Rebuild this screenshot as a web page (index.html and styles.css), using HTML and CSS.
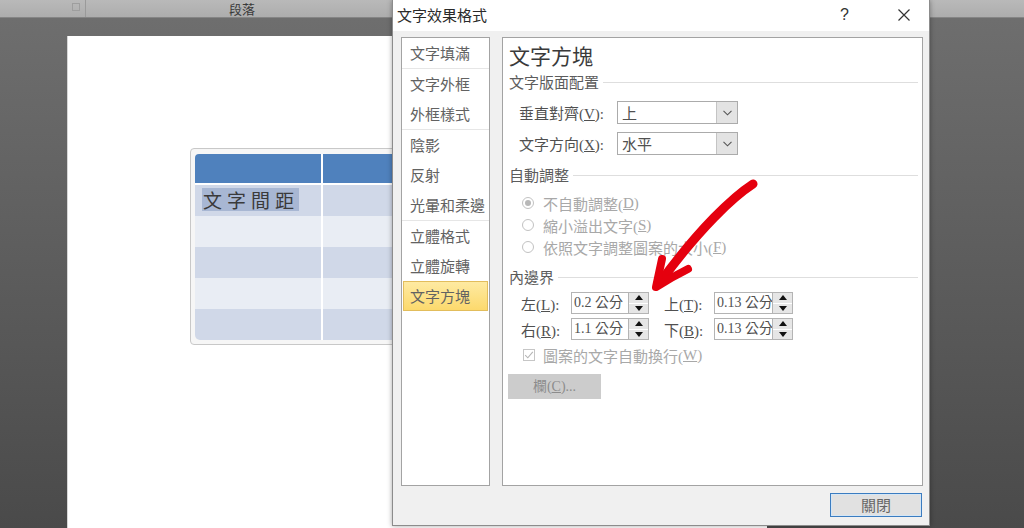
FILE: index.html
```html
<!DOCTYPE html>
<html lang="zh-Hant">
<head>
  <meta charset="UTF-8">
  <title>文字效果格式</title>
  <link rel="stylesheet" href="styles.css">
</head>
<body>
  <div class="app">
    <div class="ribbon">
      <div class="ribbon-group first"><span class="launcher"></span></div>
      <div class="ribbon-group second"><span class="group-label">段落</span></div>
    </div>

    <div class="workspace">
      <div class="page">
        <div class="table-frame">
          <table class="doc-table">
            <tr><th class="col-a"></th><th></th></tr>
            <tr class="dark"><td class="col-a"><span class="sel-text">文字間距</span></td><td></td></tr>
            <tr class="light"><td class="col-a"></td><td></td></tr>
            <tr class="dark"><td class="col-a"></td><td></td></tr>
            <tr class="light"><td class="col-a"></td><td></td></tr>
            <tr class="dark last"><td class="col-a"></td><td></td></tr>
          </table>
        </div>
      </div>
    </div>

    <div class="dialog">
      <div class="titlebar">
        <span class="title">文字效果格式</span>
        <span class="help">?</span>
        <svg class="close-x" width="12" height="12" viewBox="0 0 12 12"><path d="M0.5 0.5 L11.5 11.5 M11.5 0.5 L0.5 11.5" stroke="#333" stroke-width="1.2" fill="none"/></svg>
      </div>

      <div class="dialog-body">
        <div class="nav">
          <div class="nav-group">
            <div class="nav-item">文字填滿</div>
          </div>
          <div class="nav-group">
            <div class="nav-item">文字外框</div>
            <div class="nav-item">外框樣式</div>
          </div>
          <div class="nav-group">
            <div class="nav-item">陰影</div>
            <div class="nav-item">反射</div>
            <div class="nav-item">光暈和柔邊</div>
          </div>
          <div class="nav-group end">
            <div class="nav-item">立體格式</div>
            <div class="nav-item">立體旋轉</div>
            <div class="nav-item selected">文字方塊</div>
          </div>
        </div>

        <div class="content">
          <h2 class="pane-title">文字方塊</h2>

          <div class="section-head first">文字版面配置</div>
          <div class="field-row">
            <span class="label">垂直對齊(<u>V</u>):</span>
            <div class="select">
              <span class="select-value">上</span>
              <span class="select-arrow"><svg width="9" height="6" viewBox="0 0 9 6"><path d="M0.5 0.8 L4.5 4.8 L8.5 0.8" stroke="#555" stroke-width="1.1" fill="none"/></svg></span>
            </div>
          </div>
          <div class="field-row second">
            <span class="label">文字方向(<u>X</u>):</span>
            <div class="select">
              <span class="select-value">水平</span>
              <span class="select-arrow"><svg width="9" height="6" viewBox="0 0 9 6"><path d="M0.5 0.8 L4.5 4.8 L8.5 0.8" stroke="#555" stroke-width="1.1" fill="none"/></svg></span>
            </div>
          </div>

          <div class="section-head auto">自動調整</div>
          <div class="option first"><span class="radio checked"></span>不自動調整(<u>D</u>)</div>
          <div class="option"><span class="radio"></span>縮小溢出文字(<u>S</u>)</div>
          <div class="option"><span class="radio"></span>依照文字調整圖案的大小(<u>F</u>)</div>

          <div class="section-head inner">內邊界</div>
          <div class="margin-row first">
            <span class="m-label">左(<u>L</u>):</span>
            <div class="spin"><span class="spin-value">0.2 公分</span><span class="spin-btns"><span class="up"></span><span class="down"></span></span></div>
            <span class="m-label right">上(<u>T</u>):</span>
            <div class="spin wide"><span class="spin-value">0.13 公分</span><span class="spin-btns"><span class="up"></span><span class="down"></span></span></div>
          </div>
          <div class="margin-row">
            <span class="m-label">右(<u>R</u>):</span>
            <div class="spin"><span class="spin-value">1.1 公分</span><span class="spin-btns"><span class="up"></span><span class="down"></span></span></div>
            <span class="m-label right">下(<u>B</u>):</span>
            <div class="spin wide"><span class="spin-value">0.13 公分</span><span class="spin-btns"><span class="up"></span><span class="down"></span></span></div>
          </div>

          <div class="check-row">
            <span class="checkbox"><svg width="10" height="10" viewBox="0 0 10 10"><path d="M1.2 5.2 L3.8 7.8 L8.8 1.8" stroke="#b5b5b5" stroke-width="1.1" fill="none"/></svg></span>
            圖案的文字自動換行(<u>W</u>)
          </div>

          <div class="columns-btn">欄(<u>C</u>)...</div>
        </div>
      </div>

      <div class="dialog-footer">
        <div class="close-btn">關閉</div>
      </div>
    </div>

    <svg class="annotation" width="1024" height="528" viewBox="0 0 1024 528">
      <path d="M753 184 C733 197 700 228 661 281" stroke="#e5000e" stroke-width="9" stroke-linecap="round" fill="none"/>
      <path d="M662 259 Q659 273 656 287 Q672 277 688 269" stroke="#e5000e" stroke-width="8" stroke-linecap="round" stroke-linejoin="round" fill="none"/>
    </svg>
  </div>
</body>
</html>
```

FILE: styles.css
```css
body {
  margin: 0;
  width: 1024px;
  height: 528px;
  overflow: hidden;
  font-family: "Noto Sans CJK TC", sans-serif;
}
.app {
  position: relative;
  width: 1024px;
  height: 528px;
  background: #4c4c4c;
}

/* ribbon strip at top */
.ribbon {
  display: flex;
  height: 17px;
  background: linear-gradient(#b9b9b9, #adadad);
  border-bottom: 1px solid #858585;
}
.ribbon-group.first {
  width: 86px;
  border-right: 1px solid #9a9a9a;
  display: flex;
  justify-content: flex-end;
  padding: 3px 5px 0 0;
  box-sizing: border-box;
}
.launcher {
  width: 6px;
  height: 6px;
  border: 1px solid #9e9e9e;
}
.ribbon-group.second {
  width: 312px;
  height: 17px;
  text-align: center;
}
.group-label {
  display: block;
  font-size: 13px;
  line-height: 19px;
  margin-top: -1px;
  color: #3a3a3a;
}

/* document area */
.workspace {
  height: 510px;
  box-sizing: border-box;
  padding: 18px 0 0 67px;
  background: linear-gradient(#6e6e6e, #4a4a4a);
}
.page {
  width: 700px;
  height: 100%;
  box-sizing: border-box;
  background: #fff;
  border-left: 1px solid #d6d6d6;
  padding: 112px 0 0 122px;
}
.table-frame {
  width: 300px;
  border: 1px solid #c8c8c8;
  border-radius: 4px;
  background: #f6f6f6;
  padding: 5px 0 4px 4px;
}
.doc-table {
  border-collapse: separate;
  border-spacing: 0;
  width: 100%;
}
.doc-table th {
  height: 29px;
  padding: 0;
  background: #4f81bd;
  border-bottom: 2px solid #fff;
}
.doc-table th.col-a {
  border-top-left-radius: 4px;
}
.doc-table td {
  height: 31px;
  padding: 0;
  vertical-align: middle;
}
.doc-table .col-a {
  width: 126px;
  border-right: 2px solid #fff;
}
.doc-table tr.dark td { background: #d0d8e8; }
.doc-table tr.light td { background: #e9edf4; }
.doc-table tr.last td.col-a { border-bottom-left-radius: 5px; }
.sel-text {
  display: inline-block;
  margin-left: 7px;
  padding: 0 0 0 1px;
  background: #a8b7d3;
  color: #3a3a3a;
  font-size: 19px;
  line-height: 23px;
  letter-spacing: 5px;
}

/* dialog */
.dialog {
  position: absolute;
  left: 392px;
  top: 0;
  width: 538px;
  height: 526px;
  box-sizing: border-box;
  border: 1px solid #8c8c8c;
  border-top: none;
  background: #f0f0f0;
  display: flex;
  flex-direction: column;
  box-shadow: 0 0 5px rgba(0, 0, 0, 0.35);
}
.titlebar {
  height: 31px;
  flex: none;
  background: #fff;
  display: flex;
  align-items: center;
  padding: 0 19px 0 4px;
}
.title {
  font-size: 15px;
  line-height: 28px;
  color: #2a2a2a;
  margin-bottom: 2px;
}
.help {
  margin-left: auto;
  margin-right: 49px;
  font-family: "Liberation Sans", sans-serif;
  font-size: 16px;
  color: #333;
  margin-bottom: 2px;
}
.close-x {
  margin-bottom: 2px;
}
.dialog-body {
  display: flex;
  gap: 12px;
  padding: 6px 6px 0 8px;
}
.nav, .content {
  height: 449px;
  box-sizing: border-box;
  border: 1px solid #a3a3a3;
  background: #fff;
}
.nav {
  width: 89px;
}
.nav-group {
  border-bottom: 1px solid #e6e6e6;
}
.nav-group.end {
  border-bottom: none;
}
.nav-item {
  font-size: 15px;
  line-height: 30px;
  padding-left: 8px;
  color: #626262;
  white-space: nowrap;
}
.nav-item.selected {
  margin: 0 1px;
  padding-left: 6px;
  line-height: 28px;
  border: 1px solid #e2bd5c;
  background: linear-gradient(#feeaa2, #fcd96d);
}

.content {
  width: 421px;
  padding: 5px 4px 0 6px;
  color: #555;
}
.pane-title {
  margin: 0;
  font-size: 21px;
  line-height: 24px;
  font-weight: normal;
  color: #3a3a3a;
}
.section-head {
  display: flex;
  align-items: center;
  font-size: 15px;
  line-height: 20px;
  color: #5c5c5c;
}
.section-head::after {
  content: "";
  flex: 1;
  height: 1px;
  background: #dedede;
  margin-left: 4px;
}
.section-head.first { margin-top: 5px; }
.section-head.auto { margin-top: 10px; }
.section-head.inner { margin-top: 9px; }

.field-row {
  display: flex;
  align-items: center;
  height: 23px;
  margin-top: 9px;
  padding-left: 10px;
}
.field-row.second { margin-top: 8px; }
.label, .m-label, .option, .check-row, .spin-value, .columns-btn {
  font-family: "Liberation Serif", "Noto Sans CJK TC", serif;
  font-size: 15px;
}
.label {
  width: 98px;
  color: #505050;
  white-space: nowrap;
}
.select {
  width: 121px;
  height: 23px;
  box-sizing: border-box;
  border: 1px solid #ababab;
  display: flex;
}
.select-value {
  flex: 1;
  padding-left: 4px;
  font-size: 15px;
  line-height: 21px;
  color: #505050;
}
.select-arrow {
  width: 20px;
  background: #e3e3e3;
  border-left: 1px solid #c4c4c4;
  display: flex;
  align-items: center;
  justify-content: center;
}

.option {
  display: flex;
  align-items: center;
  height: 22px;
  padding-left: 13px;
  color: #a8a8a8;
}
.option.first { margin-top: 7px; }
.radio {
  width: 12px;
  height: 12px;
  box-sizing: border-box;
  border: 1px solid #c2c2c2;
  border-radius: 50%;
  margin-right: 9px;
  display: flex;
  align-items: center;
  justify-content: center;
}
.radio.checked::after {
  content: "";
  width: 6px;
  height: 6px;
  border-radius: 50%;
  background: #b8b8b8;
}

.margin-row {
  display: flex;
  align-items: center;
  height: 22px;
  margin-top: 4px;
  padding-left: 12px;
}
.margin-row.first { margin-top: 5px; }
.m-label {
  width: 50px;
  color: #505050;
  white-space: nowrap;
}
.m-label.right {
  margin-left: 15px;
}
.spin {
  width: 78px;
  height: 22px;
  box-sizing: border-box;
  border: 1px solid #b4b4b4;
  display: flex;
}
.spin.wide { width: 79px; }
.spin .spin-value {
  flex: 1;
  padding-left: 2px;
  font-size: 14px;
  line-height: 20px;
  color: #505050;
  white-space: nowrap;
  overflow: hidden;
}
.spin-btns {
  width: 19px;
  display: flex;
  flex-direction: column;
  border-left: 1px solid #b4b4b4;
}
.spin-btns span {
  flex: 1;
  background: #e6e6e6;
  display: flex;
  align-items: center;
  justify-content: center;
}
.spin-btns .up {
  border-bottom: 1px solid #fff;
}
.spin-btns .up::after {
  content: "";
  border-left: 4px solid transparent;
  border-right: 4px solid transparent;
  border-bottom: 5px solid #111;
}
.spin-btns .down::after {
  content: "";
  border-left: 4px solid transparent;
  border-right: 4px solid transparent;
  border-top: 5px solid #111;
}

.check-row {
  display: flex;
  align-items: center;
  height: 20px;
  margin-top: 5px;
  padding-left: 14px;
  color: #a8a8a8;
}
.checkbox {
  width: 12px;
  height: 12px;
  box-sizing: border-box;
  border: 1px solid #c6c6c6;
  margin-right: 8px;
  display: flex;
  align-items: center;
  justify-content: center;
}
.columns-btn {
  width: 93px;
  height: 25px;
  margin: 9px 0 0 -1px;
  background: #cccccc;
  color: #8c8c8c;
  font-size: 14px;
  line-height: 25px;
  text-align: center;
}

.dialog-footer {
  display: flex;
  justify-content: flex-end;
  padding: 7px 7px 0 0;
}
.close-btn {
  width: 92px;
  height: 24px;
  box-sizing: border-box;
  border: 1px solid #3b7cc0;
  box-shadow: inset 0 0 0 1px #d4e6f6;
  background: #e1e1e1;
  color: #666;
  font-size: 15px;
  line-height: 22px;
  text-align: center;
}

.annotation {
  position: absolute;
  left: 0;
  top: 0;
  pointer-events: none;
}
```
